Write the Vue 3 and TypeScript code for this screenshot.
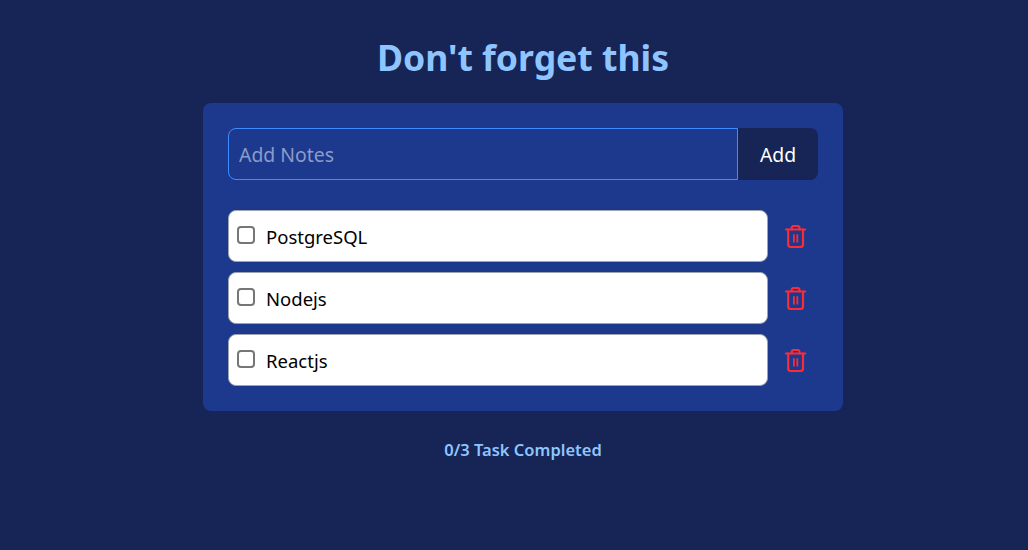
<script setup lang="ts">
import { computed, ref } from 'vue'

interface Note { id: number; text: string; done: boolean }

const draft = ref('')
const notes = ref<Note[]>([
  { id: 1, text: 'PostgreSQL', done: false },
  { id: 2, text: 'Nodejs', done: false },
  { id: 3, text: 'Reactjs', done: false },
])
const completed = computed(() => notes.value.filter((n) => n.done).length)
</script>

<template>
  <main class="page">
    <h1 class="title">Don't forget this</h1>
    <section class="card">
      <form class="add" @submit.prevent>
        <input v-model="draft" class="field" type="text" placeholder="Add Notes" />
        <button class="add-btn" type="submit">Add</button>
      </form>
      <ul class="list">
        <li v-for="note in notes" :key="note.id" class="row">
          <label class="note">
            <input v-model="note.done" class="check" type="checkbox" />
            <span class="note-text">{{ note.text }}</span>
          </label>
          <button class="trash" type="button" aria-label="Delete">
            <svg class="trash-icon" width="24" height="24" viewBox="0 0 24 24" fill="none" stroke="currentColor" stroke-width="2.2" stroke-linecap="round" stroke-linejoin="round">
              <path d="M2 4.5h19.2" />
              <path d="M4.2 4.5v15a2.5 2.5 0 0 0 2.5 2.5h9.8a2.5 2.5 0 0 0 2.5-2.5v-15" />
              <path d="M7.7 4.5V3a2 2 0 0 1 2-2h3.8a2 2 0 0 1 2 2v1.5" />
              <path d="M9.9 10v6.8" stroke-width="1.8" />
              <path d="M13.3 10v6.8" stroke-width="1.8" />
            </svg>
          </button>
        </li>
      </ul>
    </section>
    <p class="status">{{ completed }}/{{ notes.length }} Task Completed</p>
  </main>
</template>

<style>
html, body { margin: 0; background: #162456; }
</style>

<style scoped>
.page {
  box-sizing: border-box;
  height: 550px;
  padding: 32px 0 0 18px;
  display: flex;
  flex-direction: column;
  align-items: center;
  background: #162456;
  font-family: "Noto Sans", "Open Sans", sans-serif;
  overflow: hidden;
}
.title {
  margin: 0 0 19px;
  height: 52px;
  line-height: 50px;
  font-size: 35.6px;
  font-weight: 700;
  color: #8ec5ff;
}
.card {
  box-sizing: border-box;
  width: 640px;
  height: 308px;
  padding: 25px;
  background: #1c398e;
  border-radius: 8px;
}
.add { display: flex; height: 52px; margin-bottom: 30px; }
.field {
  box-sizing: border-box;
  width: 510px;
  height: 52px;
  padding: 0 10px;
  background: transparent;
  border: 1px solid #3f8cff;
  border-radius: 8px 0 0 8px;
  outline: none;
  color: #fff;
  font: inherit;
  font-size: 19.4px;
}
.field::placeholder { color: #8a9cc9; opacity: 1; }
.add-btn {
  width: 80px;
  height: 52px;
  border: 0;
  background: #162456;
  color: #fff;
  font: inherit;
  font-size: 19.4px;
  border-radius: 0 8px 8px 0;
  padding: 0;
}
.list { list-style: none; margin: 0; padding: 0; display: flex; flex-direction: column; gap: 10px; }
.row { display: flex; align-items: center; gap: 16px; }
.note {
  box-sizing: border-box;
  width: 540px;
  height: 52px;
  display: flex;
  align-items: center;
  gap: 11px;
  padding-left: 8px;
  background: #fff;
  border: 1px solid #9ca3af;
  border-radius: 8px;
  color: #000;
  font-size: 18.5px;
}
.check {
  appearance: none;
  box-sizing: border-box;
  width: 18px;
  height: 18px;
  margin: 0 0 2px 0;
  border: 2px solid #767676;
  border-radius: 4px;
  background: #fff;
}
.trash {
  width: 24px;
  height: 26px;
  padding: 2px 0 0;
  border: 0;
  background: none;
  color: #fb2c36;
}
.trash-icon { display: block; }
.status {
  margin: 28px 0 0;
  font-size: 16.5px;
  line-height: 22px;
  font-weight: 600;
  color: #8ec5ff;
}
</style>
